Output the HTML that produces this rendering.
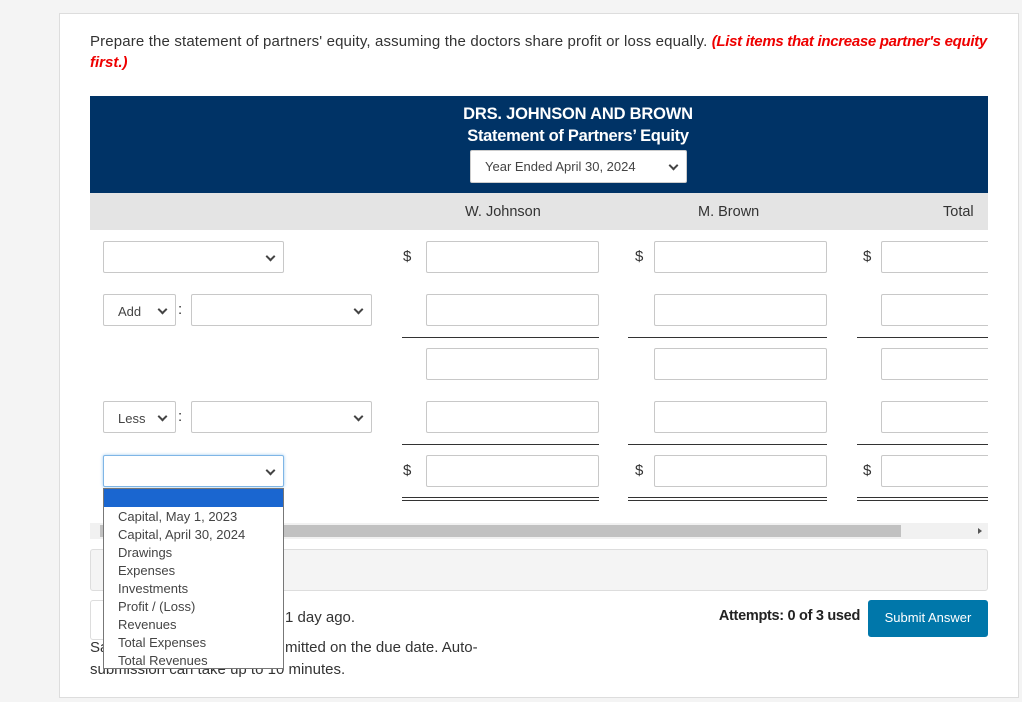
<!DOCTYPE html>
<html><head><meta charset="utf-8"><style>
*{box-sizing:border-box;margin:0;padding:0}
body{width:1022px;height:702px;background:#f4f4f4;font-family:"Liberation Sans",sans-serif;color:#333;position:relative;overflow:hidden}
.abs{position:absolute}
.card{left:59px;top:13px;width:960px;height:685px;background:#fff;border:1px solid #ddd}
.inp{position:absolute;height:32px;background:#fff;border:1px solid #c8c8c8;border-radius:2px}
.sel::after{content:"";position:absolute;right:9px;top:11px;width:5px;height:5px;border-right:2px solid #444;border-bottom:2px solid #444;transform:rotate(45deg)}
.d{position:absolute;font-size:15px;color:#333}
.ln{position:absolute;height:1px;background:#333}
.t{position:absolute;font-size:14px;white-space:nowrap}
</style></head><body>
<div class="abs card"></div>
<div class="t" style="left:90px;top:33px;font-size:15px;letter-spacing:0.15px">Prepare the statement of partners' equity, assuming the doctors share profit or loss equally. <i style="color:#e00;font-weight:bold;letter-spacing:-0.3px">(List items that increase partner's equity</i></div>
<div class="t" style="left:90px;top:54px;font-size:15px;color:#e00;font-weight:bold;font-style:italic">first.)</div>
<div class="abs" style="left:90px;top:96px;width:898px;height:97px;background:#003366"></div>
<div class="t" style="left:440px;top:105px;width:276px;text-align:center;color:#fff;font-weight:bold;font-size:16.5px;letter-spacing:-0.2px">DRS. JOHNSON AND BROWN</div>
<div class="t" style="left:440px;top:127px;width:276px;text-align:center;color:#fff;font-weight:bold;font-size:16.5px;letter-spacing:-0.3px">Statement of Partners’ Equity</div>
<div class="inp sel" style="left:470px;top:150px;width:217px;height:33px;border-color:#ccc"><span class="t" style="left:14px;top:8px;font-size:13px;color:#444">Year Ended April 30, 2024</span></div>
<div class="abs" style="left:90px;top:193px;width:898px;height:37px;background:#e4e4e4"></div>
<div class="t" style="left:465px;top:204px;font-size:14.5px">W. Johnson</div>
<div class="t" style="left:698px;top:204px;font-size:14.5px">M. Brown</div>
<div class="t" style="left:943px;top:204px;font-size:14.5px">Total</div>

<div class="inp sel" style="left:103px;top:241px;width:181px"></div>
<div class="d" style="left:403px;top:248px">$</div><div class="inp" style="left:426px;top:241px;width:173px"></div>
<div class="d" style="left:635px;top:248px">$</div><div class="inp" style="left:654px;top:241px;width:173px"></div>
<div class="d" style="left:863px;top:248px">$</div><div class="inp" style="left:881px;top:241px;width:120px"></div>

<div class="inp sel" style="left:103px;top:294px;width:73px"><span class="t" style="left:14px;top:9px;font-size:13px;color:#444">Add</span></div>
<div class="d" style="left:178px;top:301px">:</div>
<div class="inp sel" style="left:191px;top:294px;width:181px"></div>
<div class="inp" style="left:426px;top:294px;width:173px"></div>
<div class="inp" style="left:654px;top:294px;width:173px"></div>
<div class="inp" style="left:881px;top:294px;width:120px"></div>
<div class="ln" style="left:402px;top:337px;width:197px"></div>
<div class="ln" style="left:628px;top:337px;width:199px"></div>
<div class="ln" style="left:857px;top:337px;width:131px"></div>

<div class="inp" style="left:426px;top:348px;width:173px"></div>
<div class="inp" style="left:654px;top:348px;width:173px"></div>
<div class="inp" style="left:881px;top:348px;width:120px"></div>

<div class="inp sel" style="left:103px;top:401px;width:73px"><span class="t" style="left:14px;top:9px;font-size:13px;color:#444">Less</span></div>
<div class="d" style="left:178px;top:408px">:</div>
<div class="inp sel" style="left:191px;top:401px;width:181px"></div>
<div class="inp" style="left:426px;top:401px;width:173px"></div>
<div class="inp" style="left:654px;top:401px;width:173px"></div>
<div class="inp" style="left:881px;top:401px;width:120px"></div>
<div class="ln" style="left:402px;top:444px;width:197px"></div>
<div class="ln" style="left:628px;top:444px;width:199px"></div>
<div class="ln" style="left:857px;top:444px;width:131px"></div>

<div class="d" style="left:403px;top:462px">$</div><div class="inp" style="left:426px;top:455px;width:173px"></div>
<div class="d" style="left:635px;top:462px">$</div><div class="inp" style="left:654px;top:455px;width:173px"></div>
<div class="d" style="left:863px;top:462px">$</div><div class="inp" style="left:881px;top:455px;width:120px"></div>
<div class="ln" style="left:402px;top:497px;width:197px"></div><div class="ln" style="left:402px;top:500px;width:197px"></div>
<div class="ln" style="left:628px;top:497px;width:199px"></div><div class="ln" style="left:628px;top:500px;width:199px"></div>
<div class="ln" style="left:857px;top:497px;width:131px"></div><div class="ln" style="left:857px;top:500px;width:131px"></div>
<div class="abs" style="left:988px;top:230px;width:30px;height:290px;background:#fff"></div>

<div class="abs" style="left:90px;top:523px;width:898px;height:16px;background:#f1f1f1"></div>
<div class="abs" style="left:100px;top:525px;width:801px;height:12px;background:#c1c1c1"></div>
<div class="abs" style="left:978px;top:528px;width:0;height:0;border-left:4px solid #555;border-top:3px solid transparent;border-bottom:3px solid transparent"></div>
<div class="abs" style="left:90px;top:549px;width:898px;height:42px;background:#f4f4f4;border:1px solid #ddd;border-radius:3px"></div>
<div class="abs" style="left:90px;top:600px;width:60px;height:40px;border:1px solid #ddd;border-radius:3px"></div>
<div class="t" style="left:285px;top:609px;font-size:15px">1 day ago.</div>
<div class="t" style="left:90px;top:639px;font-size:15px">Sa</div>
<div class="t" style="left:285px;top:639px;font-size:15px">mitted on the due date. Auto-</div>
<div class="t" style="left:90px;top:661px;font-size:15px">submission can take up to 10 minutes.</div>
<div class="t" style="left:660px;top:608px;width:200px;text-align:right;font-size:14.5px;font-weight:bold;letter-spacing:-0.3px;color:#222">Attempts: 0 of 3 used</div>
<div class="abs" style="left:868px;top:600px;width:120px;height:37px;background:#0077aa;border-radius:3px"></div>
<div class="t" style="left:868px;top:610px;width:120px;text-align:center;color:#fff;font-size:13px">Submit Answer</div>

<div class="inp sel" style="left:103px;top:455px;width:181px;border-color:#7fb6e6;box-shadow:0 0 3px #9cc8f0"></div>
<div class="abs" style="left:103px;top:488px;width:181px;height:181px;background:#fff;border:1px solid #777"></div>
<div class="abs" style="left:104px;top:489px;width:179px;height:18px;background:#1a66d0"></div>
<div class="abs" style="left:118px;top:508px;font-size:13px;line-height:18px;color:#444">Capital, May 1, 2023<br>Capital, April 30, 2024<br>Drawings<br>Expenses<br>Investments<br>Profit / (Loss)<br>Revenues<br>Total Expenses<br>Total Revenues</div>
</body></html>
